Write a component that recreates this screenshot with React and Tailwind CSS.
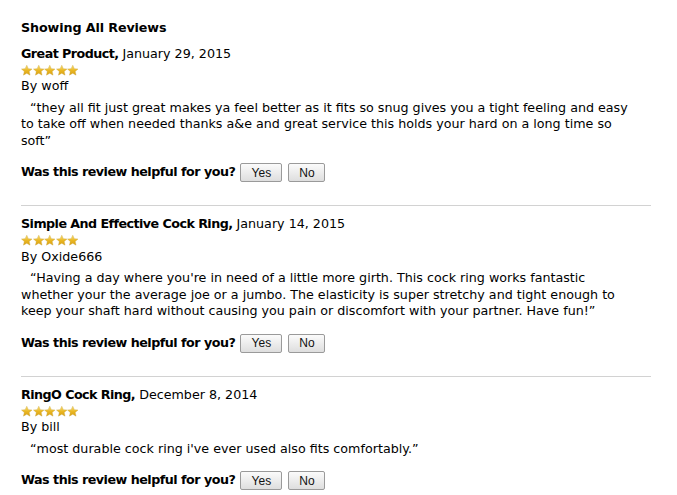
import React from "react";

const reviews = [
  {
    title: "Great Product,",
    date: "January 29, 2015",
    author: "woff",
    text: "“they all fit just great makes ya feel better as it fits so snug gives you a tight feeling and easy to take off when needed thanks a&e and great service this holds your hard on a long time so soft”",
  },
  {
    title: "Simple And Effective Cock Ring,",
    date: "January 14, 2015",
    author: "Oxide666",
    text: "“Having a day where you're in need of a little more girth. This cock ring works fantastic whether your the average joe or a jumbo. The elasticity is super stretchy and tight enough to keep your shaft hard without causing you pain or discomfort with your partner. Have fun!”",
  },
  {
    title: "RingO Cock Ring,",
    date: "December 8, 2014",
    author: "bill",
    text: "“most durable cock ring i've ever used also fits comfortably.”",
  },
];

const Star = () => (
  <svg width="11.5" height="11" viewBox="0 0 24 23">
    <defs>
      <linearGradient id="gold" x1="0" y1="0" x2="0" y2="1">
        <stop offset="0" stopColor="#fbe27a" />
        <stop offset="0.55" stopColor="#e9b51f" />
        <stop offset="1" stopColor="#d9a21a" />
      </linearGradient>
    </defs>
    <path
      d="M12 0.5l3.3 7.2 7.7.7-5.9 5.1 1.8 7.7L12 17.2 5.1 21.2 6.9 13.5 1 8.4l7.7-.7z"
      fill="url(#gold)"
      stroke="#c9a43a"
      strokeWidth="0.8"
    />
  </svg>
);

const Stars = () => (
  <div className="flex h-4 items-center">
    {[0, 1, 2, 3, 4].map((i) => (
      <Star key={i} />
    ))}
  </div>
);

const VoteButton = ({ label, width }) => (
  <button
    className={`h-[19px] ${width} rounded-[2px] border border-[#9a9a9a] bg-gradient-to-b from-[#fbfbfb] to-[#dedede] text-[12px] leading-none text-[#111] font-['Liberation_Sans',Arial,sans-serif]`}
  >
    {label}
  </button>
);

const Review = ({ review, last }) => (
  <div className={last ? "" : "border-b border-[#d2d2d2] pb-[23px] mb-[10px]"}>
    <div>
      <span className="font-bold tracking-[-0.55px]">{review.title}</span> {review.date}
    </div>
    <Stars />
    <div>By {review.author}</div>
    <p className="mt-[5px] w-[608px] indent-[9px]">{review.text}</p>
    <div className="mt-[14px] flex items-center">
      <span className="mr-[5px] font-bold tracking-[-0.5px]">Was this review helpful for you?</span>
      <VoteButton label="Yes" width="w-[42px]" />
      <span className="w-[6px]" />
      <VoteButton label="No" width="w-[37px]" />
    </div>
  </div>
);

export default function App() {
  return (
    <div className="min-h-screen bg-white font-['DejaVu_Sans',Verdana,sans-serif] text-[12.7px] leading-[16.5px] text-black">
      <div className="w-[630px] pl-[21px] pt-[20px] box-content">
        <h2 className="mb-[9px] font-bold tracking-[-0.1px]">Showing All Reviews</h2>
        {reviews.map((r, i) => (
          <Review key={i} review={r} last={i === reviews.length - 1} />
        ))}
      </div>
    </div>
  );
}
